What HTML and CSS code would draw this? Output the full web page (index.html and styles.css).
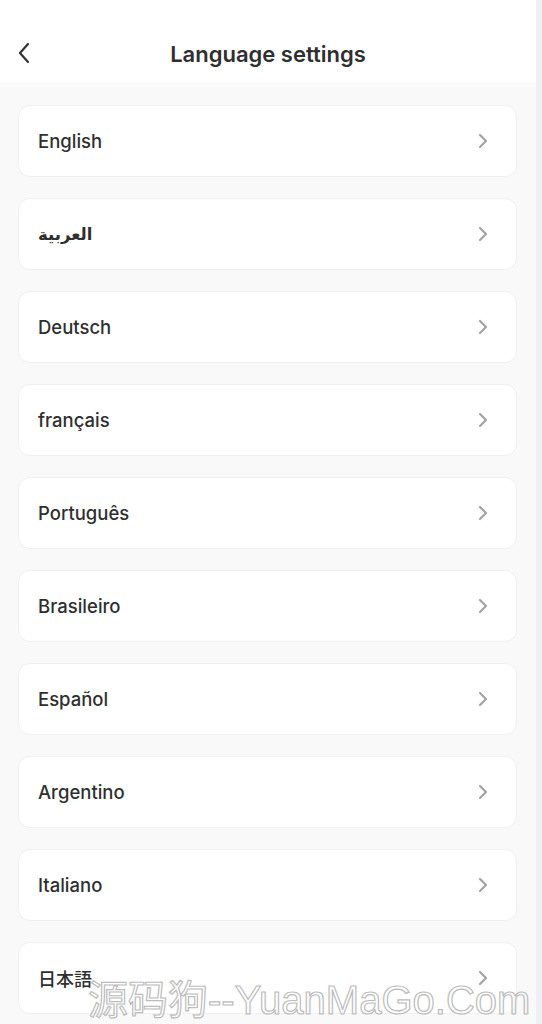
FILE: index.html
```html
<!DOCTYPE html>
<html>
<head>
<meta charset="utf-8">
<link rel="stylesheet" href="styles.css">
</head>
<body>
<div class="page">
  <main class="main">
    <header class="header">
      <svg class="back" width="14" height="22" viewBox="0 0 14 22"><path d="M11 2 L3 11 L11 20" fill="none" stroke="#333" stroke-width="2.2" stroke-linecap="round" stroke-linejoin="round"/></svg>
      <h1 class="title">Language settings</h1>
    </header>
    <section class="list">
      <div class="item"><span class="label">English</span><svg class="chev" width="10" height="16" viewBox="0 0 10 16"><path d="M2 2 L8 8 L2 14" fill="none" stroke="#a3a3a3" stroke-width="2.2" stroke-linecap="round" stroke-linejoin="round"/></svg></div>
      <div class="item"><span class="label arabic">العربية</span><svg class="chev" width="10" height="16" viewBox="0 0 10 16"><path d="M2 2 L8 8 L2 14" fill="none" stroke="#a3a3a3" stroke-width="2.2" stroke-linecap="round" stroke-linejoin="round"/></svg></div>
      <div class="item"><span class="label">Deutsch</span><svg class="chev" width="10" height="16" viewBox="0 0 10 16"><path d="M2 2 L8 8 L2 14" fill="none" stroke="#a3a3a3" stroke-width="2.2" stroke-linecap="round" stroke-linejoin="round"/></svg></div>
      <div class="item"><span class="label">français</span><svg class="chev" width="10" height="16" viewBox="0 0 10 16"><path d="M2 2 L8 8 L2 14" fill="none" stroke="#a3a3a3" stroke-width="2.2" stroke-linecap="round" stroke-linejoin="round"/></svg></div>
      <div class="item"><span class="label">Português</span><svg class="chev" width="10" height="16" viewBox="0 0 10 16"><path d="M2 2 L8 8 L2 14" fill="none" stroke="#a3a3a3" stroke-width="2.2" stroke-linecap="round" stroke-linejoin="round"/></svg></div>
      <div class="item"><span class="label">Brasileiro</span><svg class="chev" width="10" height="16" viewBox="0 0 10 16"><path d="M2 2 L8 8 L2 14" fill="none" stroke="#a3a3a3" stroke-width="2.2" stroke-linecap="round" stroke-linejoin="round"/></svg></div>
      <div class="item"><span class="label">Español</span><svg class="chev" width="10" height="16" viewBox="0 0 10 16"><path d="M2 2 L8 8 L2 14" fill="none" stroke="#a3a3a3" stroke-width="2.2" stroke-linecap="round" stroke-linejoin="round"/></svg></div>
      <div class="item"><span class="label">Argentino</span><svg class="chev" width="10" height="16" viewBox="0 0 10 16"><path d="M2 2 L8 8 L2 14" fill="none" stroke="#a3a3a3" stroke-width="2.2" stroke-linecap="round" stroke-linejoin="round"/></svg></div>
      <div class="item"><span class="label">Italiano</span><svg class="chev" width="10" height="16" viewBox="0 0 10 16"><path d="M2 2 L8 8 L2 14" fill="none" stroke="#a3a3a3" stroke-width="2.2" stroke-linecap="round" stroke-linejoin="round"/></svg></div>
      <div class="item"><span class="label cjk">日本語</span><svg class="chev" width="10" height="16" viewBox="0 0 10 16"><path d="M2 2 L8 8 L2 14" fill="none" stroke="#a3a3a3" stroke-width="2.2" stroke-linecap="round" stroke-linejoin="round"/></svg></div>
    </section>
  </main>
  <div class="scrollbar"></div>
  <div class="watermark">源码狗--YuanMaGo.Com</div>
</div>
</body>
</html>
```
FILE: styles.css
```css
html, body {
  margin: 0;
  padding: 0;
  height: 1024px;
  overflow: hidden;
  background: #f9f9f9;
  font-family: Inter, "Liberation Sans", "Noto Sans CJK JP", sans-serif;
}
.page {
  position: relative;
  display: flex;
  height: 1024px;
}
.main {
  width: 536px;
  background: #f9f9f9;
  height: 1018px;
  overflow: hidden;
}
.scrollbar {
  width: 6px;
  height: 1024px;
  background: #eef0f5;
}
.header {
  position: relative;
  height: 82px;
  background: #fff;
  display: flex;
  align-items: center;
  justify-content: center;
}
.back {
  position: absolute;
  left: 17px;
  top: 42px;
}
.title {
  margin: 26px 0 0 0;
  font-size: 22px;
  font-weight: 600;
  color: #2f2f2f;
}
.list {
  display: flex;
  flex-direction: column;
  gap: 21px;
  padding: 23px 19px 0 18px;
}
.item {
  height: 70px;
  flex: none;
  background: #fff;
  border: 1px solid #f0f0f0;
  border-radius: 12px;
  display: flex;
  align-items: center;
  justify-content: space-between;
  padding: 0 28px 0 19px;
}
.label {
  font-size: 18.5px;
  color: #2f2f2f;
  font-weight: 500;
}
.arabic {
  font-family: "DejaVu Sans", "Noto Sans", sans-serif;
  font-weight: bold;
  font-size: 16.5px;
}
.cjk {
  font-family: "Noto Sans CJK JP", sans-serif;
  font-weight: 500;
  font-size: 18px;
}
.chev {
  display: block;
}
.watermark {
  position: absolute;
  left: 88px;
  top: 980px;
  font-family: "Liberation Sans", "Noto Sans CJK SC", sans-serif;
  font-size: 40px;
  font-weight: 400;
  color: transparent;
  -webkit-text-stroke: 1.2px #bcbcbc;
  white-space: nowrap;
  line-height: 1;
}
```
